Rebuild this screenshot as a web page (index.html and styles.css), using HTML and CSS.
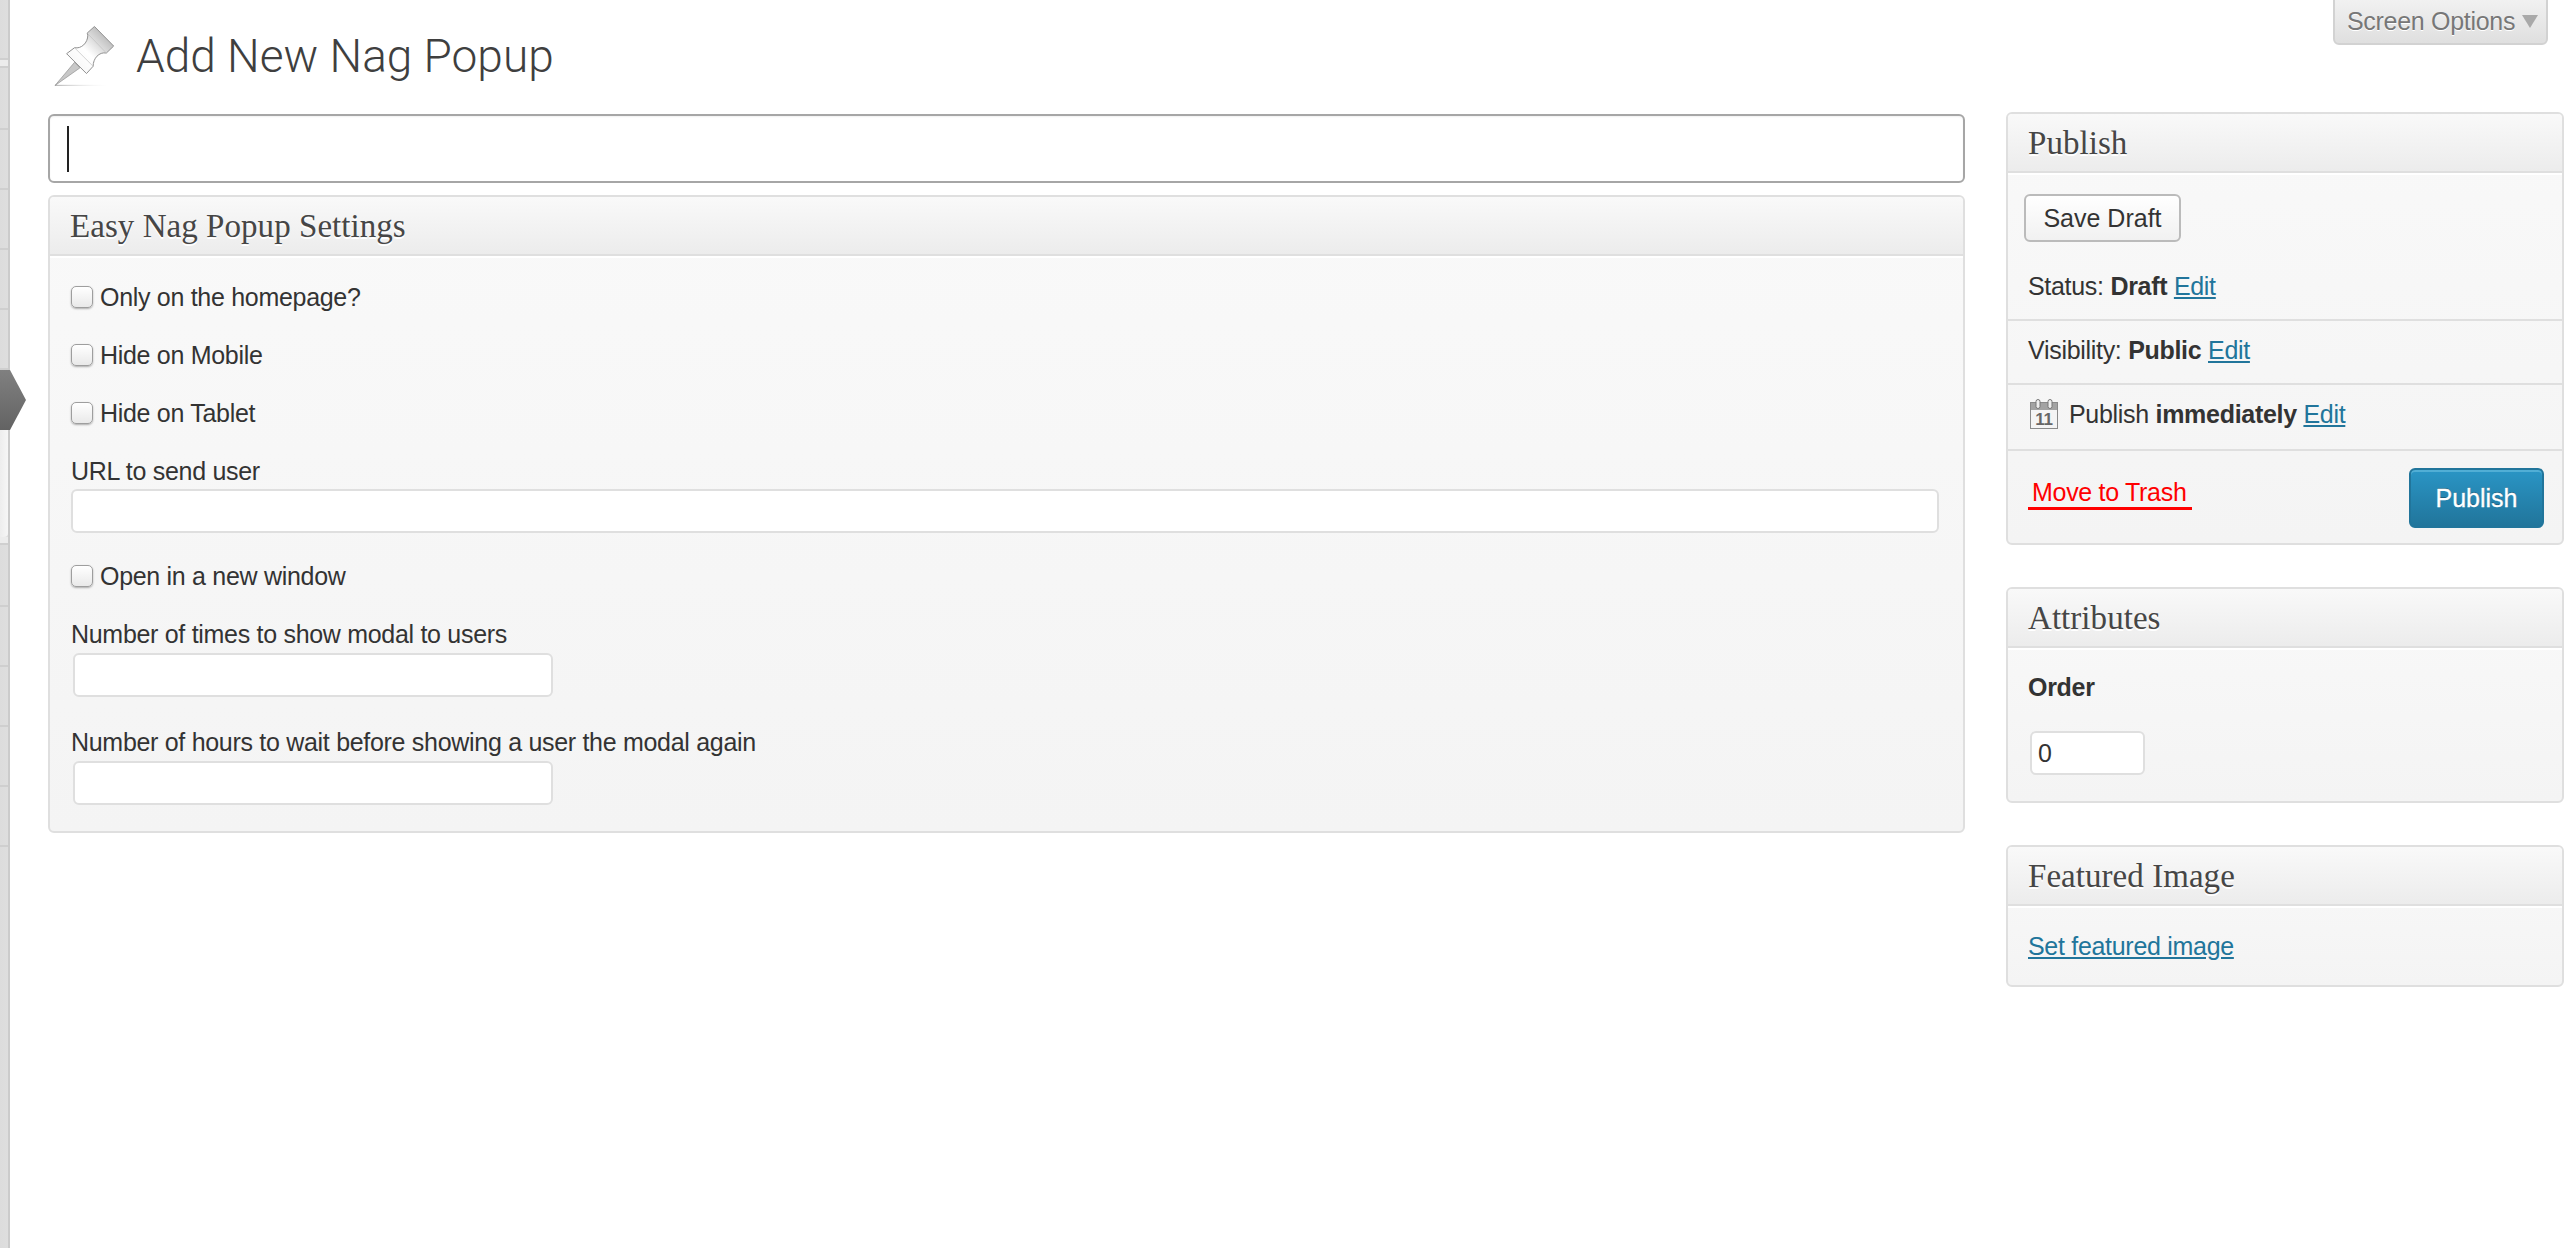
FILE: index.html
```html
<!DOCTYPE html>
<html lang="en">
<head>
<meta charset="utf-8">
<title>Add New Nag Popup</title>
<link rel="stylesheet" href="styles.css">
</head>
<body>
<div class="page">
  <aside class="strip">
    <div class="tick first"></div>
    <div class="tick s70"></div>
    <div class="tick"></div>
    <div class="tick"></div>
    <div class="tick"></div>
    <div class="tick"></div>
    <div class="current"></div>
    <div class="panel"></div>
    <div class="tick double"></div>
    <div class="tick"></div>
    <div class="tick"></div>
    <div class="tick"></div>
    <div class="tick"></div>
  </aside>
  <main class="wrap">
    <header class="heading">
      <div class="title-group">
        <svg class="pin" viewBox="160 74 184 186" aria-hidden="true">
          <defs>
            <linearGradient id="pinCross" x1="0" y1="1" x2="1" y2="0">
              <stop offset="0" stop-color="#f4f4f4"/>
              <stop offset="0.45" stop-color="#ffffff"/>
              <stop offset="1" stop-color="#9c9c9c"/>
            </linearGradient>
            <linearGradient id="pinShadow" x1="0" y1="0" x2="1" y2="0">
              <stop offset="0" stop-color="#aaa"/>
              <stop offset="1" stop-color="#eee" stop-opacity="0"/>
            </linearGradient>
          </defs>
          <rect x="163" y="254" width="160" height="3" fill="url(#pinShadow)"/>
          <path d="M163 256 L222 186 L238 203 Z" fill="#c8c8c8" stroke="#8f8f8f" stroke-width="2"/>
          <path d="M198 160 L222 142 C242 146 262 128 262 104 L260 98 L282 78 L340 137 L318 158 C296 154 278 174 278 198 L258 220 Z" fill="url(#pinCross)" stroke="#8f8f8f" stroke-width="3"/>
          <path d="M222 142 L278 198 M262 100 L318 158" fill="none" stroke="#bdbdbd" stroke-width="2"/>
        </svg>
        <h1 class="page-title">Add New Nag Popup</h1>
      </div>
      <button class="screen-options" type="button">Screen Options<span class="tri"></span></button>
    </header>
    <div class="columns">
      <section class="col-main">
        <div class="title-field"><span class="caret"></span></div>
        <div class="box">
          <h3 class="box-head">Easy Nag Popup Settings</h3>
          <div class="box-body settings">
            <label class="field check"><input type="checkbox" class="cb">Only on the homepage?</label>
            <label class="field check"><input type="checkbox" class="cb">Hide on Mobile</label>
            <label class="field check"><input type="checkbox" class="cb">Hide on Tablet</label>
            <label class="field lab">URL to send user</label>
            <input type="text" class="inp url">
            <label class="field check"><input type="checkbox" class="cb">Open in a new window</label>
            <label class="field lab">Number of times to show modal to users</label>
            <input type="text" class="inp num">
            <label class="field lab wide">Number of hours to wait before showing a user the modal again</label>
            <input type="text" class="inp num">
          </div>
        </div>
      </section>
      <section class="col-side">
        <div class="box">
          <h3 class="box-head">Publish</h3>
          <div class="box-body pub">
            <div class="save-row"><button class="btn-save" type="button">Save Draft</button></div>
            <div class="misc status">Status: <b>Draft</b> <a href="#">Edit</a></div>
            <div class="misc vis">Visibility: <b>Public</b> <a href="#">Edit</a></div>
            <div class="misc when">
              <svg class="cal" viewBox="0 0 28 30" aria-hidden="true">
                <rect x="0.5" y="3.5" width="27" height="26" fill="#f4f4f4" stroke="#8a8a8a"/>
                <rect x="1" y="4" width="26" height="7" fill="#a3a3a3"/>
                <rect x="6" y="0.5" width="4" height="9" rx="2" fill="#eee" stroke="#777"/>
                <rect x="18" y="0.5" width="4" height="9" rx="2" fill="#eee" stroke="#777"/>
                <text x="14" y="26" class="cal-num">11</text>
              </svg>
              <span>Publish <b>immediately</b> <a href="#">Edit</a></span>
            </div>
            <div class="foot">
              <a class="trash" href="#">Move to Trash</a>
              <button class="btn-pub" type="button">Publish</button>
            </div>
          </div>
        </div>
        <div class="box">
          <h3 class="box-head">Attributes</h3>
          <div class="box-body attrs">
            <div class="order"><b>Order</b></div>
            <input type="text" class="inp small" value="0">
          </div>
        </div>
        <div class="box">
          <h3 class="box-head">Featured Image</h3>
          <div class="box-body feat"><a href="#">Set featured image</a></div>
        </div>
      </section>
    </div>
  </main>
</div>
</body>
</html>
```
FILE: styles.css
```css
* { box-sizing: border-box; }
html, body { margin: 0; padding: 0; height: 100%; background: #fff; }
body { font-family: "Liberation Sans", Arial, sans-serif; font-size: 25px; letter-spacing: -0.3px; color: #333; overflow: hidden; }
.page { display: flex; height: 1248px; }

.strip { flex: 0 0 10px; width: 10px; min-width: 0; display: flex; flex-direction: column; background: linear-gradient(90deg, #dcdcdc 0, #dedede 8px, #cbcbcb 8px, #cbcbcb 10px); }
.tick { flex: none; width: 8px; height: 60px; border-bottom: 2px solid #cfcfcf; }
.tick.s70, .tick.double { height: 70px; background: linear-gradient(180deg, #ececec 0, #ececec 6px, #cfcfcf 6px, #cfcfcf 8px, transparent 8px); }
.current { flex: none; height: 60px; width: 26px; position: relative; z-index: 2; background: linear-gradient(180deg, #808080, #636363); clip-path: polygon(0 0, 10px 0, 26px 50%, 10px 100%, 0 100%); }
.panel { flex: none; height: 107px; width: 8px; border-radius: 0 0 4px 0; background: linear-gradient(90deg, #ededed, #f6f6f6); }

.wrap { flex: 1; min-width: 0; padding: 0 10px 0 38px; }
.heading { height: 114px; display: flex; justify-content: space-between; align-items: flex-start; }
.title-group { display: flex; align-items: flex-start; }
.pin { width: 61px; height: 62px; margin: 25px 0 0 6px; flex: none; }
.page-title { margin: 29px 0 0 21px; font-family: Roboto, "Liberation Sans", sans-serif; font-weight: 300; font-size: 46px; line-height: 54px; color: #3f3f3f; letter-spacing: 0; }
.screen-options { margin: -2px 16px 0 0; height: 47px; width: 215px; padding: 0 8px 0 12px; display: flex; align-items: center; justify-content: space-between; font: 25px "Liberation Sans", sans-serif; color: #777; letter-spacing: -0.3px; background: linear-gradient(180deg, #f1f1f1, #dfdfdf); border: 2px solid #d2d2d2; border-radius: 0 0 6px 6px; text-shadow: 0 1px 0 #fff; }
.tri { width: 0; height: 0; border-left: 8px solid transparent; border-right: 8px solid transparent; border-top: 13px solid #a9a9a9; }

.columns { display: grid; grid-template-columns: 1917px 558px; column-gap: 41px; align-items: start; margin-top: -2px; }
.col-main { padding-top: 2px; display: flex; flex-direction: column; gap: 12px; }
.col-side { display: flex; flex-direction: column; gap: 42px; }

.title-field { height: 69px; border: 2px solid #a6a6a6; border-radius: 6px; background: #fff; padding: 10px 0 0 17px; box-shadow: inset 0 1px 2px rgba(0,0,0,.06); }
.caret { display: block; width: 2px; height: 46px; background: #222; }

.box { border: 2px solid #dfdfdf; border-radius: 6px; background: linear-gradient(180deg, #f9f9f9, #f4f4f4); overflow: hidden; }
.box-head { margin: 0; height: 59px; padding: 2px 0 0 20px; display: flex; align-items: center; font-family: "Liberation Serif", serif; font-weight: 400; font-size: 33px; letter-spacing: 0.05px; color: #464646; background: linear-gradient(180deg, #f9f9f9, #ececec); border-bottom: 2px solid #dfdfdf; text-shadow: 0 2px 0 #fff; }
.box-body { box-shadow: inset 0 2px 0 #fff; }

.settings { padding: 26px 24px 26px 21px; }
.field { display: flex; align-items: center; height: 30px; margin-top: 28px; color: #333; white-space: nowrap; }
.field:first-child { margin-top: 0; }
.check { gap: 7px; }
.cb { appearance: none; -webkit-appearance: none; margin: 0; width: 22px; height: 22px; flex: none; border: 1px solid #9e9e9e; border-radius: 5px; background: linear-gradient(180deg, #fff, #e9e9e9); box-shadow: 0 1px 2px rgba(0,0,0,.3); }
.inp { display: block; height: 44px; border: 2px solid #dfdfdf; border-radius: 6px; background: #fff; font: 25px "Liberation Sans", sans-serif; color: #333; padding: 0 6px; outline: none; }
.url { width: 100%; margin-top: 3px; }
.num { width: 480px; margin: 4px 0 0 2px; }
.wide { margin-top: 30px; }

.save-row { padding: 21px 0 0 16px; }
.btn-save { width: 157px; height: 48px; padding: 0; font: 25px "Liberation Sans", sans-serif; color: #333; background: linear-gradient(180deg, #fff, #f1f1f1); border: 2px solid #bbb; border-radius: 6px; }
.misc { padding-left: 20px; line-height: 30px; border-bottom: 2px solid #dfdfdf; white-space: nowrap; }
.status { padding-top: 29px; padding-bottom: 18px; }
.vis { padding-top: 14px; padding-bottom: 18px; }
.when { padding-top: 14px; padding-bottom: 20px; padding-left: 22px; display: flex; align-items: center; gap: 11px; }
.cal { width: 28px; height: 30px; flex: none; }
.cal-num { font: 700 17px "Liberation Sans", sans-serif; fill: #666; text-anchor: middle; }
.misc a, .feat a { color: #21759b; text-decoration: underline; }
.foot { display: flex; justify-content: space-between; align-items: flex-start; padding: 17px 18px 15px 20px; }
.trash { margin-top: 9px; padding: 0 5px 0 4px; line-height: 30px; color: #f00; text-decoration: none; border-bottom: 3px solid #f00; }
.btn-pub { width: 135px; height: 60px; padding: 0; font: 25px "Liberation Sans", sans-serif; color: #fff; -webkit-text-stroke: 0.3px #fff; background: linear-gradient(180deg, #2a95c5, #21759b); border: 2px solid #21759b; border-radius: 6px; box-shadow: inset 0 2px 0 rgba(120,200,230,.5); text-shadow: 0 -1px 0 rgba(0,0,0,.3); }

.attrs { padding: 24px 20px 26px; }
.order { height: 30px; line-height: 30px; color: #333; }
.small { width: 115px; margin: 29px 0 0 2px; }
.feat { padding: 25px 20px 24px; line-height: 30px; }
```
